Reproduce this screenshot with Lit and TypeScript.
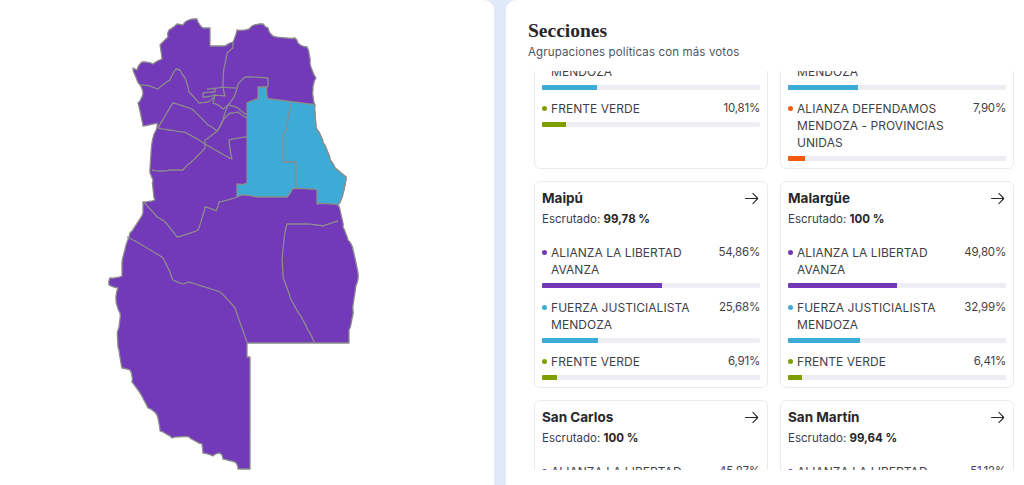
import { LitElement, css, html, svg } from "lit";
import { customElement } from "lit/decorators.js";

const PURPLE = "#7239b8";
const BLUE = "#3cabd6";
const GREEN = "#7f9f00";
const ORANGE = "#f15a0f";

interface Party {
  name: string;
  pct: number;
  color: string;
}

interface Section {
  name: string;
  counted: string;
  parties: Party[];
}

const libertad = (pct: number): Party => ({ name: "ALIANZA LA LIBERTAD AVANZA", pct, color: PURPLE });
const fuerza = (pct: number): Party => ({ name: "FUERZA JUSTICIALISTA MENDOZA", pct, color: BLUE });
const verde = (pct: number): Party => ({ name: "FRENTE VERDE", pct, color: GREEN });

const SECTIONS: Section[] = [
  { name: "Lavalle", counted: "100", parties: [libertad(47.2), fuerza(25.02), verde(10.81)] },
  {
    name: "Luján de Cuyo",
    counted: "100",
    parties: [
      libertad(44.6),
      fuerza(32.01),
      { name: "ALIANZA DEFENDAMOS MENDOZA - PROVINCIAS UNIDAS", pct: 7.9, color: ORANGE },
    ],
  },
  { name: "Maipú", counted: "99,78", parties: [libertad(54.86), fuerza(25.68), verde(6.91)] },
  { name: "Malargüe", counted: "100", parties: [libertad(49.8), fuerza(32.99), verde(6.41)] },
  { name: "San Carlos", counted: "100", parties: [libertad(45.87), fuerza(22.4), verde(9.1)] },
  { name: "San Martín", counted: "99,64", parties: [libertad(51.12), fuerza(28.3), verde(5.6)] },
];

const OUTLINE =
  "133 68 137 70 142 62 153 64 162 59 160 45 168 37 169 30 177 24 183 25 189 20 197 19 203 28 210 28 210 46 225 46 233 42 237 30 249 29 252 26 263 24 268 28 273 36 295 38 298 43 307 47 310 63 316 78 313 90 315 105 317 130 323 143 330 160 335 168 346 177 343 193 338 205 343 227 348 240 353 250 358 273 357 283 353 310 349 330 349 343 247 343 247 357 250 357 250 469 238 469 235 462 223 459 220 453 213 456 203 453 202 444 189 437 172 438 160 431 157 415 148 408 140 393 132 382 130 370 122 368 119 350 118 330 120 313 116 300 118 288 109 285 110 278 122 276 122 262 127 242 130 233 143 213 143 202 155 200 153 180 150 173 152 143 155 132 157 123 143 126 138 103 143 93 140 85 133 68";

const BLUE_AREA =
  "258 87 267 87 268 99 315 105 317 130 323 143 330 160 335 168 346 177 343 193 338 205 317 204 317 190 292 189 287 197 257 197 245 195 237 197 237 184 247 183 247 103 258 99 258 87";

const BOUNDARIES = [
  "233 42 233 48 227 53 224 68 223 86",
  "140 85 150 86 158 89 170 80 176 69 180 70 185 78 189 92 199 103 208 102 214 97",
  "268 87 268 78 245 77 238 84 235 95 228 105 223 120 218 130 205 140 205 148 190 163 183 170 170 170 162 171 152 170",
  "158 128 184 132 202 142 232 159 229 140 247 137",
  "158 128 173 103 192 109 208 125 217 131 223 120 230 113 238 112 247 118",
  "228 105 238 108 247 115",
  "207 89 223 87 225 96 215 95 203 97 203 93 215 92 215 89",
  "223 87 236 88",
  "215 95 213 103 218 105 223 109 228 105",
  "143 202 157 217 165 222 177 237 198 230 205 207 216 211 219 202 237 197",
  "127 237 133 240 163 258 170 272 173 280 183 284 188 282 220 292 235 308 247 342",
  "338 221 323 226 307 224 287 224 284 240 282 260 283 278 290 297 300 315 308 330 314 342",
  "291 103 287 127 283 136 283 162 296 162 296 189",
];

// the real border wobbles, so break the sloped segments up with a small repeatable offset
function rough(points: string, amp: number, closed = false) {
  const n = points.split(" ").map(Number);
  let d = `M${n[0]} ${n[1]}`;
  for (let i = 2; i < n.length; i += 2) {
    const [x0, y0, x1, y1] = [n[i - 2], n[i - 1], n[i], n[i + 1]];
    const len = Math.hypot(x1 - x0, y1 - y0);
    if (x0 !== x1 && y0 !== y1 && len > 5) {
      const steps = Math.round(len / 3);
      for (let s = 1; s < steps; s++) {
        const off = Math.sin((x0 + x1) * 12.9 + (y0 + y1) * 78.2 + s * 37.7) * amp;
        const x = x0 + ((x1 - x0) * s) / steps - ((y1 - y0) / len) * off;
        const y = y0 + ((y1 - y0) * s) / steps + ((x1 - x0) / len) * off;
        d += `L${x.toFixed(1)} ${y.toFixed(1)}`;
      }
    }
    d += `L${x1} ${y1}`;
  }
  return closed ? d + "Z" : d;
}

const mapSvg = svg`
  <g stroke="#8c8c8c" stroke-width="1.3" stroke-linejoin="round">
    <path d=${rough(OUTLINE, 0.9, true)} fill=${PURPLE}></path>
    <path d=${rough(BLUE_AREA, 0.9, true)} fill=${BLUE}></path>
    ${BOUNDARIES.map((b) => svg`<path d=${rough(b, 0.35)} fill="none"></path>`)}
  </g>
`;

const fmt = (n: number) => n.toFixed(2).replace(".", ",") + "%";

@customElement("app-root")
export class AppRoot extends LitElement {
  static styles = css`
    :host {
      display: block;
      height: 485px;
      overflow: hidden;
      font-family: Inter, "Liberation Sans", sans-serif;
    }

    .page {
      display: flex;
      gap: 12px;
      height: 485px;
      background: #dfe9f8;
    }

    .map-panel {
      width: 494px;
      flex: none;
      background: white;
      border-top-right-radius: 10px;
    }
    .map-panel svg {
      display: block;
    }

    .sections-panel {
      flex: 1;
      min-width: 0;
      display: flex;
      flex-direction: column;
      background: white;
      border-top-left-radius: 10px;
      padding: 20px 10px 15px 22px;
      box-sizing: border-box;
    }

    .title {
      margin: 0;
      font-family: "Liberation Serif", serif;
      font-weight: 700;
      font-size: 19.5px;
      line-height: 22px;
      color: #27272a;
    }

    .subtitle {
      margin: 1px 0 0;
      font-size: 11.5px;
      line-height: 18px;
      letter-spacing: 0.14px;
      color: #4b5563;
    }

    .list {
      flex: 1;
      min-height: 0;
      margin-top: 10px;
      padding: 0 0 0 6px;
      overflow-y: scroll;
      scrollbar-width: none;
      display: grid;
      grid-template-columns: 234px 234px;
      gap: 12px;
      align-content: start;
    }

    .card {
      border: 1px solid #e8ecf2;
      border-radius: 6px;
      padding: 8px 7px 7px;
      box-sizing: border-box;
    }

    .card-head {
      display: flex;
      align-items: center;
      justify-content: space-between;
      height: 16px;
    }

    .card-name {
      font-weight: 700;
      font-size: 13.5px;
      color: #27272a;
    }

    .arrow {
      width: 17px;
      height: 17px;
      stroke: #27272a;
      fill: none;
      stroke-width: 1.5;
    }

    .counted {
      margin: 4px 0 16px;
      font-size: 11.5px;
      line-height: 18px;
      color: #374151;
    }
    .counted b {
      font-weight: 700;
      color: #27272a;
    }

    .party + .party {
      margin-top: 10.5px;
    }

    .party-row {
      display: flex;
      justify-content: space-between;
      gap: 14px;
      font-size: 12px;
      line-height: 17px;
      color: #3f3f46;
    }

    .party-name {
      display: flex;
      gap: 4px;
      letter-spacing: 0.05px;
    }

    .party-pct {
      font-size: 11.5px;
      letter-spacing: -0.2px;
    }

    .dot {
      flex: none;
      width: 5px;
      height: 5px;
      margin-top: 6px;
      border-radius: 50%;
    }

    .bar {
      height: 5px;
      margin-top: 5px;
      border-radius: 1px;
      background: #eceef2;
      overflow: hidden;
    }

    .bar-fill {
      height: 100%;
    }
  `;

  firstUpdated() {
    const list = this.renderRoot.querySelector(".list") as HTMLElement;
    const third = list.children[2] as HTMLElement;
    list.scrollTop = third.offsetTop - list.offsetTop - 110;
  }

  private renderParty(p: Party) {
    return html`
      <div class="party">
        <div class="party-row">
          <div class="party-name">
            <span class="dot" style="background:${p.color}"></span>
            <span>${p.name}</span>
          </div>
          <span class="party-pct">${fmt(p.pct)}</span>
        </div>
        <div class="bar"><div class="bar-fill" style="width:${p.pct}%;background:${p.color}"></div></div>
      </div>
    `;
  }

  private renderCard(s: Section) {
    return html`
      <article class="card">
        <div class="card-head">
          <span class="card-name">${s.name}</span>
          <svg class="arrow" viewBox="0 0 24 24"><path d="M13.5 4.5 21 12m0 0-7.5 7.5M21 12H3"></path></svg>
        </div>
        <p class="counted">Escrutado: <b>${s.counted} %</b></p>
        ${s.parties.map((p) => this.renderParty(p))}
      </article>
    `;
  }

  render() {
    return html`
      <div class="page">
        <div class="map-panel">
          <svg width="494" height="485" viewBox="0 0 494 485">${mapSvg}</svg>
        </div>
        <section class="sections-panel">
          <h2 class="title">Secciones</h2>
          <p class="subtitle">Agrupaciones políticas con más votos</p>
          <div class="list">${SECTIONS.map((s) => this.renderCard(s))}</div>
        </section>
      </div>
    `;
  }
}
